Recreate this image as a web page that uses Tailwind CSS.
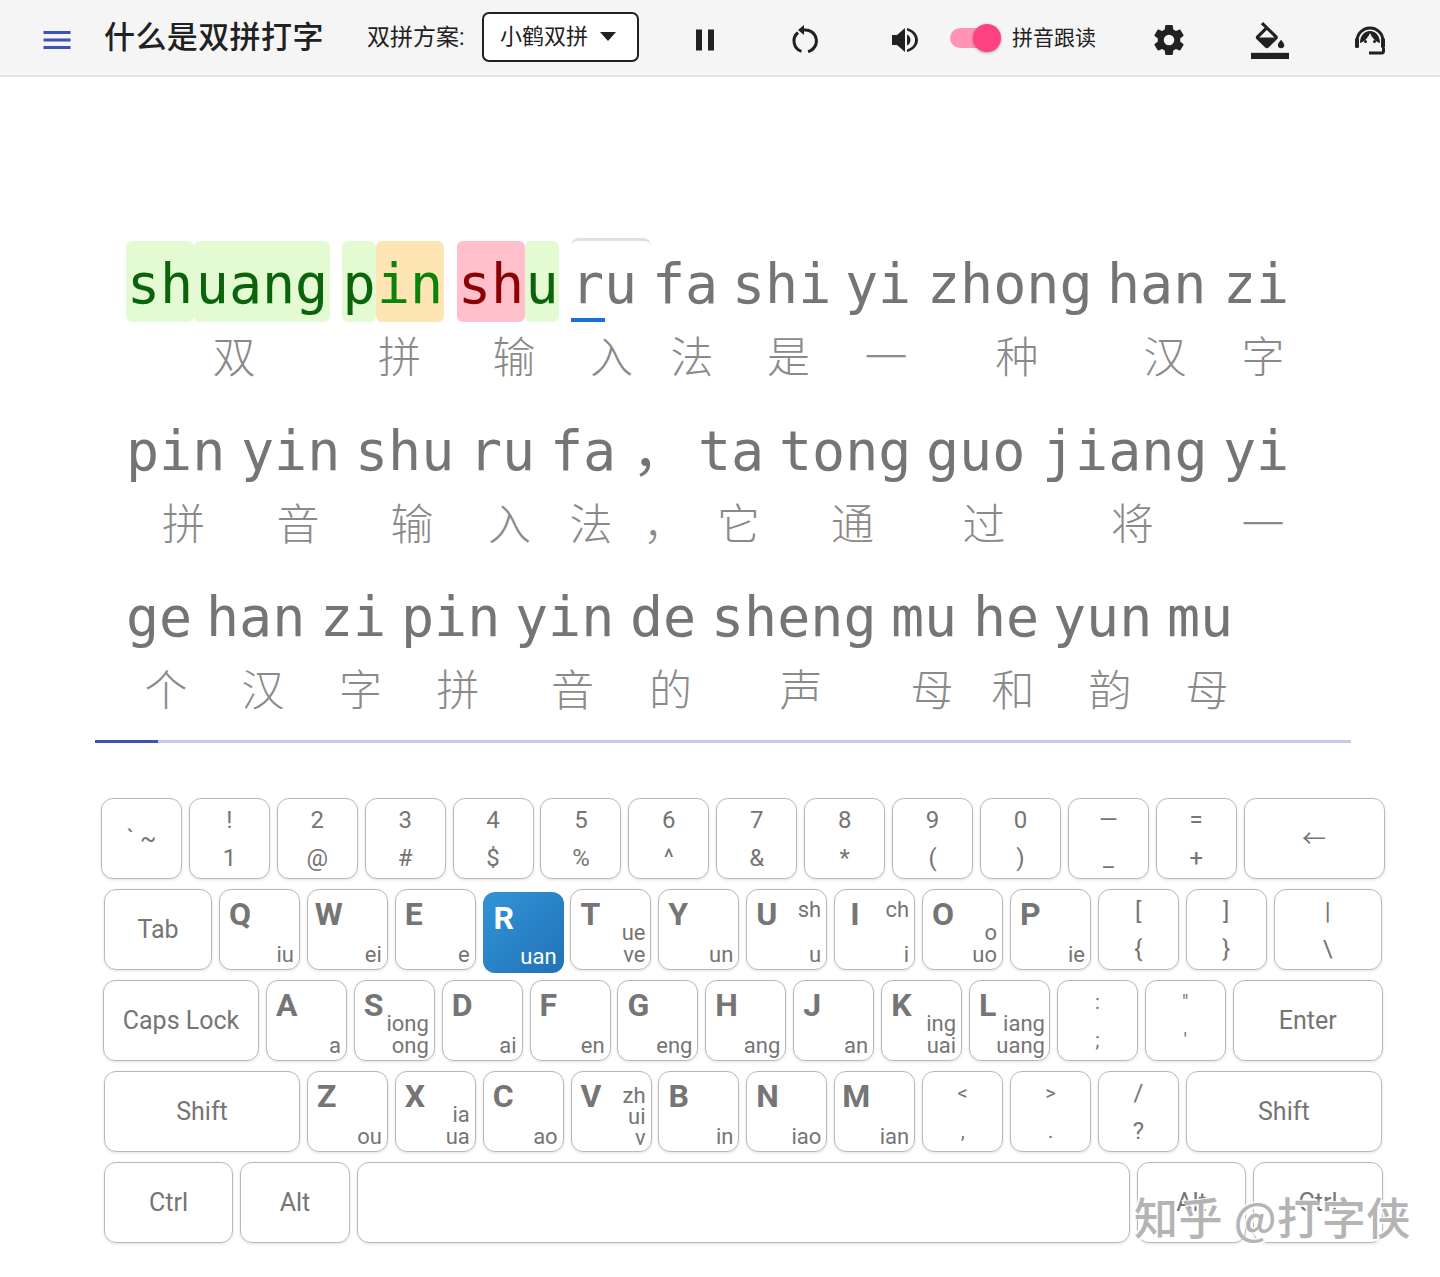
<!DOCTYPE html>
<html lang="zh"><head><meta charset="utf-8">
<script src="https://cdn.jsdelivr.net/npm/@tailwindcss/browser@4"></script>
</head>
<body class="bg-white font-['Roboto','Noto_Sans_CJK_SC',sans-serif] text-[#757575] w-[1440px] h-[1277px] overflow-hidden relative">
<header class="h-[77px] bg-[#f5f5f5] border-b-2 border-[#e4e4e4] flex items-center relative text-[#212121]">
  <svg class="absolute left-[39px] top-[22px] w-9 h-9" viewBox="0 0 24 24" fill="#3f51b5"><path d="M3,6H21V8H3V6M3,11H21V13H3V11M3,16H21V18H3V16Z"/></svg>
  <h1 class="ml-[104px] w-[263px] text-[31px] tracking-[0.4px] font-medium leading-none">什么是双拼打字</h1>
  <span class="text-[23px] w-[115px] leading-none">双拼方案:</span>
  <div class="w-[157px] h-[50px] mb-[2px] bg-white border-2 border-[#212121] rounded-[7px] flex items-center pl-[16px] text-[22px] gap-[12px]">小鹤双拼<svg class="w-[16px] h-[9px]" viewBox="0 0 16 9"><path d="M0,0H16L8,9Z" fill="#212121"/></svg></div>
  <svg class="absolute left-[687px] top-[22px] w-9 h-9" viewBox="0 0 24 24" fill="#212121"><path d="M14,19H18V5H14M6,19H10V5H6V19Z"/></svg>
  <svg class="absolute left-[787px] top-[22px] w-9 h-9" viewBox="0 0 36 36" fill="none" stroke="#212121" stroke-width="3"><path d="M17,8A11,11 0 0 1 21,29.600"/><path d="M14.500,29.400A11,11 0 0 1 11,10.500"/><path d="M17,3L11,8L17,13Z" fill="#212121" stroke="none"/></svg>
  <svg class="absolute left-[887px] top-[22px] w-9 h-9" viewBox="0 0 36 36" fill="#212121"><path d="M5,13V23H10L18,30V6L10,13Z"/><path d="M20,12.500C22.500,13.500 23.500,16 23.500,18C23.500,20 22.500,22.500 20,23.500Z"/><path d="M20,6V8.500C25,10 28,13.500 28,18C28,22.500 25,26 20,27.500V30C26.500,28.500 31,23.500 31,18C31,12.500 26.500,7.500 20,6Z"/></svg>
  <div class="absolute left-[950px] top-[28px] w-[44px] h-[20px] rounded-full bg-[#ff94b6]"></div>
  <div class="absolute left-[973px] top-[24px] w-[28px] h-[28px] rounded-full bg-[#ff4081] shadow-[0_1px_3px_rgba(0,0,0,0.35)]"></div>
  <span class="absolute left-[1012px] top-[26px] text-[21px] leading-[24px]">拼音跟读</span>
  <svg class="absolute left-[1151px] top-[22px] w-9 h-9" viewBox="0 0 24 24" fill="#212121"><path d="M12,15.5A3.5,3.5 0 0,1 8.5,12A3.5,3.5 0 0,1 12,8.5A3.5,3.5 0 0,1 15.5,12A3.5,3.5 0 0,1 12,15.5M19.43,12.97C19.47,12.65 19.5,12.33 19.5,12C19.5,11.67 19.47,11.34 19.43,11L21.54,9.37C21.73,9.22 21.78,8.95 21.66,8.73L19.66,5.27C19.54,5.05 19.27,4.96 19.05,5.05L16.56,6.05C16.04,5.66 15.5,5.32 14.87,5.07L14.5,2.42C14.46,2.18 14.25,2 14,2H10C9.75,2 9.54,2.18 9.5,2.42L9.13,5.07C8.5,5.32 7.96,5.66 7.44,6.05L4.95,5.05C4.73,4.96 4.46,5.05 4.34,5.27L2.34,8.73C2.21,8.95 2.27,9.22 2.46,9.37L4.57,11C4.53,11.34 4.5,11.67 4.5,12C4.5,12.33 4.53,12.65 4.57,12.97L2.46,14.63C2.27,14.78 2.21,15.05 2.34,15.27L4.34,18.73C4.46,18.95 4.73,19.03 4.95,18.95L7.44,17.94C7.96,18.34 8.5,18.68 9.13,18.93L9.5,21.58C9.54,21.82 9.75,22 10,22H14C14.25,22 14.46,21.82 14.5,21.58L14.87,18.93C15.5,18.67 16.04,18.34 16.56,17.94L19.05,18.95C19.27,19.03 19.54,18.95 19.66,18.73L21.66,15.27C21.78,15.05 21.73,14.78 21.54,14.63L19.43,12.97Z"/></svg>
  <svg class="absolute left-[1251px] top-[22px] w-[38px] h-[37px]" viewBox="0 0 24 24" fill="#212121" preserveAspectRatio="none"><path d="M16.56 8.94L7.62 0 6.21 1.41l2.38 2.38-5.15 5.15c-.59.59-.59 1.54 0 2.12l5.5 5.5c.29.29.68.44 1.06.44s.77-.15 1.06-.44l5.5-5.5c.59-.58.59-1.53 0-2.12zM5.21 10L10 5.21 14.79 10H5.21zM19 11.5s-2 2.17-2 3.5c0 1.1.9 2 2 2s2-.9 2-2c0-1.33-2-3.5-2-3.5z"/><rect x="0" y="20" width="24" height="4"/></svg>
  <svg class="absolute left-[1353px] top-[24px] w-[34px] h-[32px]" viewBox="0 0 34 32" fill="#212121"><path d="M4,22V17A13,13 0 0 1 30,17V22" fill="none" stroke="#212121" stroke-width="3"/><path d="M7,19C7,12 11,7 17,7C23,7 27,12 27,19C23,18 19,14 17,9C15,14 11,18 7,19Z"/><rect x="2" y="14" width="4" height="10" rx="1.500"/><rect x="28" y="14" width="4" height="10" rx="1.500"/><circle cx="12.500" cy="17.500" r="1.500"/><circle cx="21.500" cy="17.500" r="1.500"/><path d="M30.500,24V27Q30.500,29 28.500,29H16" fill="none" stroke="#212121" stroke-width="3"/></svg>
</header>

<main class="mt-[164px] ml-[126px] font-['DejaVu_Sans_Mono','Noto_Sans_CJK_SC',monospace]">
  <div class="flex h-[166.5px]">
    <div class="w-[216px]"><div class="flex h-[81px] items-center text-[55px] leading-none"><span class="w-[68px] h-[81px] pt-[6px] flex items-center justify-center rounded-[6px] bg-[#e3fad2] text-[#0b640b]">sh</span><span class="w-[136px] h-[81px] pt-[6px] flex items-center justify-center rounded-[6px] bg-[#e3fad2] text-[#0b640b]">uang</span></div><div class="h-[65px] flex items-center justify-center font-['Noto_Sans_CJK_SC'] font-light text-[43px] text-[#8a8a8a]">双</div></div>
    <div class="w-[115px]"><div class="flex h-[81px] items-center text-[55px] leading-none"><span class="w-[34px] h-[81px] pt-[6px] flex items-center justify-center rounded-[6px] bg-[#e3fad2] text-[#0b640b]">p</span><span class="w-[68px] h-[81px] pt-[6px] flex items-center justify-center rounded-[6px] bg-[#fde6b3] text-[#0b820b]">in</span></div><div class="h-[65px] flex items-center justify-center font-['Noto_Sans_CJK_SC'] font-light text-[43px] text-[#8a8a8a]">拼</div></div>
    <div class="w-[114px]"><div class="flex h-[81px] items-center text-[55px] leading-none"><span class="w-[68px] h-[81px] pt-[6px] flex items-center justify-center rounded-[6px] bg-[#ffc0cb] text-[#8b0000]">sh</span><span class="w-[34px] h-[81px] pt-[6px] flex items-center justify-center rounded-[6px] bg-[#e3fad2] text-[#0b640b]">u</span></div><div class="h-[65px] flex items-center justify-center font-['Noto_Sans_CJK_SC'] font-light text-[43px] text-[#8a8a8a]">输</div></div>
    <div class="w-[81px] relative"><div class="absolute left-0 top-[-3px] w-[80px] h-[10px] rounded-t-[8px] border-t-[3px] border-[#e0e0e0]"></div><div class="absolute left-0 top-[77px] w-[34px] h-[4px] bg-[#1a6ed8]"></div><div class="flex h-[81px] items-center text-[55px] leading-none pt-[6px]">ru</div><div class="h-[65px] flex items-center justify-center font-['Noto_Sans_CJK_SC'] font-light text-[43px] text-[#8a8a8a]">入</div></div>
    <div class="w-[80px]"><div class="flex h-[81px] items-center text-[55px] leading-none pt-[6px]">fa</div><div class="h-[65px] flex items-center justify-center font-['Noto_Sans_CJK_SC'] font-light text-[43px] text-[#8a8a8a]">法</div></div>
    <div class="w-[113px]"><div class="flex h-[81px] items-center text-[55px] leading-none pt-[6px]">shi</div><div class="h-[65px] flex items-center justify-center font-['Noto_Sans_CJK_SC'] font-light text-[43px] text-[#8a8a8a]">是</div></div>
    <div class="w-[82px]"><div class="flex h-[81px] items-center text-[55px] leading-none pt-[6px]">yi</div><div class="h-[65px] flex items-center justify-center font-['Noto_Sans_CJK_SC'] font-light text-[43px] text-[#8a8a8a]">一</div></div>
    <div class="w-[180px]"><div class="flex h-[81px] items-center text-[55px] leading-none pt-[6px]">zhong</div><div class="h-[65px] flex items-center justify-center font-['Noto_Sans_CJK_SC'] font-light text-[43px] text-[#8a8a8a]">种</div></div>
    <div class="w-[116px]"><div class="flex h-[81px] items-center text-[55px] leading-none pt-[6px]">han</div><div class="h-[65px] flex items-center justify-center font-['Noto_Sans_CJK_SC'] font-light text-[43px] text-[#8a8a8a]">汉</div></div>
    <div class="w-[80px]"><div class="flex h-[81px] items-center text-[55px] leading-none pt-[6px]">zi</div><div class="h-[65px] flex items-center justify-center font-['Noto_Sans_CJK_SC'] font-light text-[43px] text-[#8a8a8a]">字</div></div>
  </div>
  <div class="flex h-[166.5px]">
    <div class="w-[115px]"><div class="flex h-[81px] items-center text-[55px] leading-none pt-[6px]">pin</div><div class="h-[65px] flex items-center justify-center font-['Noto_Sans_CJK_SC'] font-light text-[43px] text-[#8a8a8a]">拼</div></div>
    <div class="w-[114px]"><div class="flex h-[81px] items-center text-[55px] leading-none pt-[6px]">yin</div><div class="h-[65px] flex items-center justify-center font-['Noto_Sans_CJK_SC'] font-light text-[43px] text-[#8a8a8a]">音</div></div>
    <div class="w-[114px]"><div class="flex h-[81px] items-center text-[55px] leading-none pt-[6px]">shu</div><div class="h-[65px] flex items-center justify-center font-['Noto_Sans_CJK_SC'] font-light text-[43px] text-[#8a8a8a]">输</div></div>
    <div class="w-[81px]"><div class="flex h-[81px] items-center text-[55px] leading-none pt-[6px]">ru</div><div class="h-[65px] flex items-center justify-center font-['Noto_Sans_CJK_SC'] font-light text-[43px] text-[#8a8a8a]">入</div></div>
    <div class="w-[82px]"><div class="flex h-[81px] items-center text-[55px] leading-none pt-[6px]">fa</div><div class="h-[65px] flex items-center justify-center font-['Noto_Sans_CJK_SC'] font-light text-[43px] text-[#8a8a8a]">法</div></div>
    <div class="w-[66px]"><div class="flex h-[81px] items-center text-[55px] leading-none pt-[6px]">，</div><div class="h-[65px] flex items-center justify-center font-['Noto_Sans_CJK_SC'] font-light text-[43px] text-[#8a8a8a]">，</div></div>
    <div class="w-[81px]"><div class="flex h-[81px] items-center text-[55px] leading-none pt-[6px]">ta</div><div class="h-[65px] flex items-center justify-center font-['Noto_Sans_CJK_SC'] font-light text-[43px] text-[#8a8a8a]">它</div></div>
    <div class="w-[147px]"><div class="flex h-[81px] items-center text-[55px] leading-none pt-[6px]">tong</div><div class="h-[65px] flex items-center justify-center font-['Noto_Sans_CJK_SC'] font-light text-[43px] text-[#8a8a8a]">通</div></div>
    <div class="w-[116px]"><div class="flex h-[81px] items-center text-[55px] leading-none pt-[6px]">guo</div><div class="h-[65px] flex items-center justify-center font-['Noto_Sans_CJK_SC'] font-light text-[43px] text-[#8a8a8a]">过</div></div>
    <div class="w-[181px]"><div class="flex h-[81px] items-center text-[55px] leading-none pt-[6px]">jiang</div><div class="h-[65px] flex items-center justify-center font-['Noto_Sans_CJK_SC'] font-light text-[43px] text-[#8a8a8a]">将</div></div>
    <div class="w-[80px]"><div class="flex h-[81px] items-center text-[55px] leading-none pt-[6px]">yi</div><div class="h-[65px] flex items-center justify-center font-['Noto_Sans_CJK_SC'] font-light text-[43px] text-[#8a8a8a]">一</div></div>
  </div>
  <div class="flex h-[166px]">
    <div class="w-[80px]"><div class="flex h-[81px] items-center text-[55px] leading-none pt-[6px]">ge</div><div class="h-[65px] flex items-center justify-center font-['Noto_Sans_CJK_SC'] font-light text-[43px] text-[#8a8a8a]">个</div></div>
    <div class="w-[114px]"><div class="flex h-[81px] items-center text-[55px] leading-none pt-[6px]">han</div><div class="h-[65px] flex items-center justify-center font-['Noto_Sans_CJK_SC'] font-light text-[43px] text-[#8a8a8a]">汉</div></div>
    <div class="w-[81px]"><div class="flex h-[81px] items-center text-[55px] leading-none pt-[6px]">zi</div><div class="h-[65px] flex items-center justify-center font-['Noto_Sans_CJK_SC'] font-light text-[43px] text-[#8a8a8a]">字</div></div>
    <div class="w-[114px]"><div class="flex h-[81px] items-center text-[55px] leading-none pt-[6px]">pin</div><div class="h-[65px] flex items-center justify-center font-['Noto_Sans_CJK_SC'] font-light text-[43px] text-[#8a8a8a]">拼</div></div>
    <div class="w-[115px]"><div class="flex h-[81px] items-center text-[55px] leading-none pt-[6px]">yin</div><div class="h-[65px] flex items-center justify-center font-['Noto_Sans_CJK_SC'] font-light text-[43px] text-[#8a8a8a]">音</div></div>
    <div class="w-[81px]"><div class="flex h-[81px] items-center text-[55px] leading-none pt-[6px]">de</div><div class="h-[65px] flex items-center justify-center font-['Noto_Sans_CJK_SC'] font-light text-[43px] text-[#8a8a8a]">的</div></div>
    <div class="w-[180px]"><div class="flex h-[81px] items-center text-[55px] leading-none pt-[6px]">sheng</div><div class="h-[65px] flex items-center justify-center font-['Noto_Sans_CJK_SC'] font-light text-[43px] text-[#8a8a8a]">声</div></div>
    <div class="w-[82px]"><div class="flex h-[81px] items-center text-[55px] leading-none pt-[6px]">mu</div><div class="h-[65px] flex items-center justify-center font-['Noto_Sans_CJK_SC'] font-light text-[43px] text-[#8a8a8a]">母</div></div>
    <div class="w-[80px]"><div class="flex h-[81px] items-center text-[55px] leading-none pt-[6px]">he</div><div class="h-[65px] flex items-center justify-center font-['Noto_Sans_CJK_SC'] font-light text-[43px] text-[#8a8a8a]">和</div></div>
    <div class="w-[114px]"><div class="flex h-[81px] items-center text-[55px] leading-none pt-[6px]">yun</div><div class="h-[65px] flex items-center justify-center font-['Noto_Sans_CJK_SC'] font-light text-[43px] text-[#8a8a8a]">韵</div></div>
    <div class="w-[80px]"><div class="flex h-[81px] items-center text-[55px] leading-none pt-[6px]">mu</div><div class="h-[65px] flex items-center justify-center font-['Noto_Sans_CJK_SC'] font-light text-[43px] text-[#8a8a8a]">母</div></div>
  </div>
</main>

<div class="ml-[95px] w-[1256px] h-[3px] bg-[#c5cae9]"><div class="w-[63px] h-[3px] bg-[#3f51b5]"></div></div>

<section class="mt-[55px] flex flex-col gap-[10px] text-[24px] leading-[26px]">
  <div class="flex gap-[6.9px] ml-[101px]">
    <div class="w-[81px] h-[81px] rounded-[12px] border-[1.5px] border-[#b8b8b8] shadow-[0_1px_3px_rgba(0,0,0,0.12)] flex items-center justify-center">` ~</div>
    <div class="w-[81px] h-[81px] rounded-[12px] border-[1.5px] border-[#b8b8b8] shadow-[0_1px_3px_rgba(0,0,0,0.12)] flex flex-col items-center justify-between pt-[8px] pb-[7px]"><span>!</span><span>1</span></div>
    <div class="w-[81px] h-[81px] rounded-[12px] border-[1.5px] border-[#b8b8b8] shadow-[0_1px_3px_rgba(0,0,0,0.12)] flex flex-col items-center justify-between pt-[8px] pb-[7px]"><span>2</span><span>@</span></div>
    <div class="w-[81px] h-[81px] rounded-[12px] border-[1.5px] border-[#b8b8b8] shadow-[0_1px_3px_rgba(0,0,0,0.12)] flex flex-col items-center justify-between pt-[8px] pb-[7px]"><span>3</span><span>#</span></div>
    <div class="w-[81px] h-[81px] rounded-[12px] border-[1.5px] border-[#b8b8b8] shadow-[0_1px_3px_rgba(0,0,0,0.12)] flex flex-col items-center justify-between pt-[8px] pb-[7px]"><span>4</span><span>$</span></div>
    <div class="w-[81px] h-[81px] rounded-[12px] border-[1.5px] border-[#b8b8b8] shadow-[0_1px_3px_rgba(0,0,0,0.12)] flex flex-col items-center justify-between pt-[8px] pb-[7px]"><span>5</span><span>%</span></div>
    <div class="w-[81px] h-[81px] rounded-[12px] border-[1.5px] border-[#b8b8b8] shadow-[0_1px_3px_rgba(0,0,0,0.12)] flex flex-col items-center justify-between pt-[8px] pb-[7px]"><span>6</span><span>^</span></div>
    <div class="w-[81px] h-[81px] rounded-[12px] border-[1.5px] border-[#b8b8b8] shadow-[0_1px_3px_rgba(0,0,0,0.12)] flex flex-col items-center justify-between pt-[8px] pb-[7px]"><span>7</span><span>&amp;</span></div>
    <div class="w-[81px] h-[81px] rounded-[12px] border-[1.5px] border-[#b8b8b8] shadow-[0_1px_3px_rgba(0,0,0,0.12)] flex flex-col items-center justify-between pt-[8px] pb-[7px]"><span>8</span><span>*</span></div>
    <div class="w-[81px] h-[81px] rounded-[12px] border-[1.5px] border-[#b8b8b8] shadow-[0_1px_3px_rgba(0,0,0,0.12)] flex flex-col items-center justify-between pt-[8px] pb-[7px]"><span>9</span><span>(</span></div>
    <div class="w-[81px] h-[81px] rounded-[12px] border-[1.5px] border-[#b8b8b8] shadow-[0_1px_3px_rgba(0,0,0,0.12)] flex flex-col items-center justify-between pt-[8px] pb-[7px]"><span>0</span><span>)</span></div>
    <div class="w-[81px] h-[81px] rounded-[12px] border-[1.5px] border-[#b8b8b8] shadow-[0_1px_3px_rgba(0,0,0,0.12)] flex flex-col items-center justify-between pt-[8px] pb-[7px]"><span>—</span><span>_</span></div>
    <div class="w-[81px] h-[81px] rounded-[12px] border-[1.5px] border-[#b8b8b8] shadow-[0_1px_3px_rgba(0,0,0,0.12)] flex flex-col items-center justify-between pt-[8px] pb-[7px]"><span>=</span><span>+</span></div>
    <div class="w-[141px] h-[81px] rounded-[12px] border-[1.5px] border-[#b8b8b8] shadow-[0_1px_3px_rgba(0,0,0,0.12)] flex items-center justify-center">←</div>
  </div>
  <div class="flex gap-[6.9px] ml-[104px]">
    <div class="w-[108px] h-[81px] rounded-[12px] border-[1.5px] border-[#b8b8b8] shadow-[0_1px_3px_rgba(0,0,0,0.12)] flex items-center justify-center text-[25px]">Tab</div>
    <div class="w-[81px] h-[81px] rounded-[12px] border-[1.5px] border-[#b8b8b8] shadow-[0_1px_3px_rgba(0,0,0,0.12)] flex justify-between pl-[9px] pr-[5px] pt-[5px] pb-[3px]"><span class="text-[32px] leading-[38px] font-bold">Q</span><span class="flex flex-col items-end justify-end text-[22px] leading-[22px]"><span>iu</span></span></div>
    <div class="w-[81px] h-[81px] rounded-[12px] border-[1.5px] border-[#b8b8b8] shadow-[0_1px_3px_rgba(0,0,0,0.12)] flex justify-between pl-[7px] pr-[5px] pt-[5px] pb-[3px]"><span class="text-[32px] leading-[38px] font-bold">W</span><span class="flex flex-col items-end justify-end text-[22px] leading-[22px]"><span>ei</span></span></div>
    <div class="w-[81px] h-[81px] rounded-[12px] border-[1.5px] border-[#b8b8b8] shadow-[0_1px_3px_rgba(0,0,0,0.12)] flex justify-between pl-[9px] pr-[5px] pt-[5px] pb-[3px]"><span class="text-[32px] leading-[38px] font-bold">E</span><span class="flex flex-col items-end justify-end text-[22px] leading-[22px]"><span>e</span></span></div>
    <div class="w-[81px] h-[81px] translate-y-[3px] rounded-[12px] bg-gradient-to-br from-[#3394d6] to-[#2172b8] text-white flex justify-between pl-[11px] pr-[7px] pt-[7px] pb-[5px]"><span class="text-[32px] leading-[38px] font-bold">R</span><span class="flex flex-col items-end justify-end text-[22px] leading-[22px]"><span>uan</span></span></div>
    <div class="w-[81px] h-[81px] rounded-[12px] border-[1.5px] border-[#b8b8b8] shadow-[0_1px_3px_rgba(0,0,0,0.12)] flex justify-between pl-[9px] pr-[5px] pt-[5px] pb-[3px]"><span class="text-[32px] leading-[38px] font-bold">T</span><span class="flex flex-col items-end justify-end text-[22px] leading-[22px]"><span>ue</span><span>ve</span></span></div>
    <div class="w-[81px] h-[81px] rounded-[12px] border-[1.5px] border-[#b8b8b8] shadow-[0_1px_3px_rgba(0,0,0,0.12)] flex justify-between pl-[9px] pr-[5px] pt-[5px] pb-[3px]"><span class="text-[32px] leading-[38px] font-bold">Y</span><span class="flex flex-col items-end justify-end text-[22px] leading-[22px]"><span>un</span></span></div>
    <div class="w-[81px] h-[81px] rounded-[12px] border-[1.5px] border-[#b8b8b8] shadow-[0_1px_3px_rgba(0,0,0,0.12)] flex justify-between pl-[9px] pr-[5px] pt-[5px] pb-[3px]"><span class="text-[32px] leading-[38px] font-bold">U</span><span class="flex flex-col items-end justify-between text-[22px] leading-[22px] pt-[4px]"><span>sh</span><span>u</span></span></div>
    <div class="w-[81px] h-[81px] rounded-[12px] border-[1.5px] border-[#b8b8b8] shadow-[0_1px_3px_rgba(0,0,0,0.12)] flex justify-between pl-[15px] pr-[5px] pt-[5px] pb-[3px]"><span class="text-[32px] leading-[38px] font-bold">I</span><span class="flex flex-col items-end justify-between text-[22px] leading-[22px] pt-[4px]"><span>ch</span><span>i</span></span></div>
    <div class="w-[81px] h-[81px] rounded-[12px] border-[1.5px] border-[#b8b8b8] shadow-[0_1px_3px_rgba(0,0,0,0.12)] flex justify-between pl-[9px] pr-[5px] pt-[5px] pb-[3px]"><span class="text-[32px] leading-[38px] font-bold">O</span><span class="flex flex-col items-end justify-end text-[22px] leading-[22px]"><span>o</span><span>uo</span></span></div>
    <div class="w-[81px] h-[81px] rounded-[12px] border-[1.5px] border-[#b8b8b8] shadow-[0_1px_3px_rgba(0,0,0,0.12)] flex justify-between pl-[9px] pr-[5px] pt-[5px] pb-[3px]"><span class="text-[32px] leading-[38px] font-bold">P</span><span class="flex flex-col items-end justify-end text-[22px] leading-[22px]"><span>ie</span></span></div>
    <div class="w-[81px] h-[81px] rounded-[12px] border-[1.5px] border-[#b8b8b8] shadow-[0_1px_3px_rgba(0,0,0,0.12)] flex flex-col items-center justify-between pt-[8px] pb-[7px]"><span>[</span><span>{</span></div>
    <div class="w-[81px] h-[81px] rounded-[12px] border-[1.5px] border-[#b8b8b8] shadow-[0_1px_3px_rgba(0,0,0,0.12)] flex flex-col items-center justify-between pt-[8px] pb-[7px]"><span>]</span><span>}</span></div>
    <div class="w-[108px] h-[81px] rounded-[12px] border-[1.5px] border-[#b8b8b8] shadow-[0_1px_3px_rgba(0,0,0,0.12)] flex flex-col items-center justify-between pt-[8px] pb-[7px]"><span>|</span><span>\</span></div>
  </div>
  <div class="flex gap-[6.9px] ml-[103px]">
    <div class="w-[156px] h-[81px] rounded-[12px] border-[1.5px] border-[#b8b8b8] shadow-[0_1px_3px_rgba(0,0,0,0.12)] flex items-center justify-center text-[25px]">Caps Lock</div>
    <div class="w-[81px] h-[81px] rounded-[12px] border-[1.5px] border-[#b8b8b8] shadow-[0_1px_3px_rgba(0,0,0,0.12)] flex justify-between pl-[9px] pr-[5px] pt-[5px] pb-[3px]"><span class="text-[32px] leading-[38px] font-bold">A</span><span class="flex flex-col items-end justify-end text-[22px] leading-[22px]"><span>a</span></span></div>
    <div class="w-[81px] h-[81px] rounded-[12px] border-[1.5px] border-[#b8b8b8] shadow-[0_1px_3px_rgba(0,0,0,0.12)] flex justify-between pl-[9px] pr-[5px] pt-[5px] pb-[3px]"><span class="text-[32px] leading-[38px] font-bold">S</span><span class="flex flex-col items-end justify-end text-[22px] leading-[22px]"><span>iong</span><span>ong</span></span></div>
    <div class="w-[81px] h-[81px] rounded-[12px] border-[1.5px] border-[#b8b8b8] shadow-[0_1px_3px_rgba(0,0,0,0.12)] flex justify-between pl-[9px] pr-[5px] pt-[5px] pb-[3px]"><span class="text-[32px] leading-[38px] font-bold">D</span><span class="flex flex-col items-end justify-end text-[22px] leading-[22px]"><span>ai</span></span></div>
    <div class="w-[81px] h-[81px] rounded-[12px] border-[1.5px] border-[#b8b8b8] shadow-[0_1px_3px_rgba(0,0,0,0.12)] flex justify-between pl-[9px] pr-[5px] pt-[5px] pb-[3px]"><span class="text-[32px] leading-[38px] font-bold">F</span><span class="flex flex-col items-end justify-end text-[22px] leading-[22px]"><span>en</span></span></div>
    <div class="w-[81px] h-[81px] rounded-[12px] border-[1.5px] border-[#b8b8b8] shadow-[0_1px_3px_rgba(0,0,0,0.12)] flex justify-between pl-[9px] pr-[5px] pt-[5px] pb-[3px]"><span class="text-[32px] leading-[38px] font-bold">G</span><span class="flex flex-col items-end justify-end text-[22px] leading-[22px]"><span>eng</span></span></div>
    <div class="w-[81px] h-[81px] rounded-[12px] border-[1.5px] border-[#b8b8b8] shadow-[0_1px_3px_rgba(0,0,0,0.12)] flex justify-between pl-[9px] pr-[5px] pt-[5px] pb-[3px]"><span class="text-[32px] leading-[38px] font-bold">H</span><span class="flex flex-col items-end justify-end text-[22px] leading-[22px]"><span>ang</span></span></div>
    <div class="w-[81px] h-[81px] rounded-[12px] border-[1.5px] border-[#b8b8b8] shadow-[0_1px_3px_rgba(0,0,0,0.12)] flex justify-between pl-[9px] pr-[5px] pt-[5px] pb-[3px]"><span class="text-[32px] leading-[38px] font-bold">J</span><span class="flex flex-col items-end justify-end text-[22px] leading-[22px]"><span>an</span></span></div>
    <div class="w-[81px] h-[81px] rounded-[12px] border-[1.5px] border-[#b8b8b8] shadow-[0_1px_3px_rgba(0,0,0,0.12)] flex justify-between pl-[9px] pr-[5px] pt-[5px] pb-[3px]"><span class="text-[32px] leading-[38px] font-bold">K</span><span class="flex flex-col items-end justify-end text-[22px] leading-[22px]"><span>ing</span><span>uai</span></span></div>
    <div class="w-[81px] h-[81px] rounded-[12px] border-[1.5px] border-[#b8b8b8] shadow-[0_1px_3px_rgba(0,0,0,0.12)] flex justify-between pl-[9px] pr-[5px] pt-[5px] pb-[3px]"><span class="text-[32px] leading-[38px] font-bold">L</span><span class="flex flex-col items-end justify-end text-[22px] leading-[22px]"><span>iang</span><span>uang</span></span></div>
    <div class="w-[81px] h-[81px] rounded-[12px] border-[1.5px] border-[#b8b8b8] shadow-[0_1px_3px_rgba(0,0,0,0.12)] flex flex-col items-center justify-between pt-[8px] pb-[7px] text-[20px]"><span>:</span><span>;</span></div>
    <div class="w-[81px] h-[81px] rounded-[12px] border-[1.5px] border-[#b8b8b8] shadow-[0_1px_3px_rgba(0,0,0,0.12)] flex flex-col items-center justify-between pt-[8px] pb-[7px] text-[20px]"><span>"</span><span>'</span></div>
    <div class="w-[150px] h-[81px] rounded-[12px] border-[1.5px] border-[#b8b8b8] shadow-[0_1px_3px_rgba(0,0,0,0.12)] flex items-center justify-center text-[25px]">Enter</div>
  </div>
  <div class="flex gap-[6.9px] ml-[104px]">
    <div class="w-[196px] h-[81px] rounded-[12px] border-[1.5px] border-[#b8b8b8] shadow-[0_1px_3px_rgba(0,0,0,0.12)] flex items-center justify-center text-[25px]">Shift</div>
    <div class="w-[81px] h-[81px] rounded-[12px] border-[1.5px] border-[#b8b8b8] shadow-[0_1px_3px_rgba(0,0,0,0.12)] flex justify-between pl-[9px] pr-[5px] pt-[5px] pb-[3px]"><span class="text-[32px] leading-[38px] font-bold">Z</span><span class="flex flex-col items-end justify-end text-[22px] leading-[22px]"><span>ou</span></span></div>
    <div class="w-[81px] h-[81px] rounded-[12px] border-[1.5px] border-[#b8b8b8] shadow-[0_1px_3px_rgba(0,0,0,0.12)] flex justify-between pl-[9px] pr-[5px] pt-[5px] pb-[3px]"><span class="text-[32px] leading-[38px] font-bold">X</span><span class="flex flex-col items-end justify-end text-[22px] leading-[22px]"><span>ia</span><span>ua</span></span></div>
    <div class="w-[81px] h-[81px] rounded-[12px] border-[1.5px] border-[#b8b8b8] shadow-[0_1px_3px_rgba(0,0,0,0.12)] flex justify-between pl-[9px] pr-[5px] pt-[5px] pb-[3px]"><span class="text-[32px] leading-[38px] font-bold">C</span><span class="flex flex-col items-end justify-end text-[22px] leading-[22px]"><span>ao</span></span></div>
    <div class="w-[81px] h-[81px] rounded-[12px] border-[1.5px] border-[#b8b8b8] shadow-[0_1px_3px_rgba(0,0,0,0.12)] flex justify-between pl-[9px] pr-[5px] pt-[5px] pb-[3px]"><span class="text-[32px] leading-[38px] font-bold">V</span><span class="flex flex-col items-end justify-end text-[22px] leading-[21px]"><span>zh</span><span>ui</span><span>v</span></span></div>
    <div class="w-[81px] h-[81px] rounded-[12px] border-[1.5px] border-[#b8b8b8] shadow-[0_1px_3px_rgba(0,0,0,0.12)] flex justify-between pl-[9px] pr-[5px] pt-[5px] pb-[3px]"><span class="text-[32px] leading-[38px] font-bold">B</span><span class="flex flex-col items-end justify-end text-[22px] leading-[22px]"><span>in</span></span></div>
    <div class="w-[81px] h-[81px] rounded-[12px] border-[1.5px] border-[#b8b8b8] shadow-[0_1px_3px_rgba(0,0,0,0.12)] flex justify-between pl-[9px] pr-[5px] pt-[5px] pb-[3px]"><span class="text-[32px] leading-[38px] font-bold">N</span><span class="flex flex-col items-end justify-end text-[22px] leading-[22px]"><span>iao</span></span></div>
    <div class="w-[81px] h-[81px] rounded-[12px] border-[1.5px] border-[#b8b8b8] shadow-[0_1px_3px_rgba(0,0,0,0.12)] flex justify-between pl-[7px] pr-[5px] pt-[5px] pb-[3px]"><span class="text-[32px] leading-[38px] font-bold">M</span><span class="flex flex-col items-end justify-end text-[22px] leading-[22px]"><span>ian</span></span></div>
    <div class="w-[81px] h-[81px] rounded-[12px] border-[1.5px] border-[#b8b8b8] shadow-[0_1px_3px_rgba(0,0,0,0.12)] flex flex-col items-center justify-between pt-[8px] pb-[7px] text-[20px]"><span>&lt;</span><span>,</span></div>
    <div class="w-[81px] h-[81px] rounded-[12px] border-[1.5px] border-[#b8b8b8] shadow-[0_1px_3px_rgba(0,0,0,0.12)] flex flex-col items-center justify-between pt-[8px] pb-[7px] text-[20px]"><span>&gt;</span><span>.</span></div>
    <div class="w-[81px] h-[81px] rounded-[12px] border-[1.5px] border-[#b8b8b8] shadow-[0_1px_3px_rgba(0,0,0,0.12)] flex flex-col items-center justify-between pt-[8px] pb-[7px]"><span>/</span><span>?</span></div>
    <div class="w-[196px] h-[81px] rounded-[12px] border-[1.5px] border-[#b8b8b8] shadow-[0_1px_3px_rgba(0,0,0,0.12)] flex items-center justify-center text-[25px]">Shift</div>
  </div>
  <div class="flex gap-[7px] ml-[104px]">
    <div class="w-[129px] h-[81px] rounded-[12px] border-[1.5px] border-[#b8b8b8] shadow-[0_1px_3px_rgba(0,0,0,0.12)] flex items-center justify-center text-[25px]">Ctrl</div>
    <div class="w-[110px] h-[81px] rounded-[12px] border-[1.5px] border-[#b8b8b8] shadow-[0_1px_3px_rgba(0,0,0,0.12)] flex items-center justify-center text-[25px]">Alt</div>
    <div class="w-[773px] h-[81px] rounded-[12px] border-[1.5px] border-[#b8b8b8] shadow-[0_1px_3px_rgba(0,0,0,0.12)]"></div>
    <div class="w-[109px] h-[81px] rounded-[12px] border-[1.5px] border-[#b8b8b8] shadow-[0_1px_3px_rgba(0,0,0,0.12)] flex items-center justify-center text-[25px]">Alt</div>
    <div class="w-[130px] h-[81px] rounded-[12px] border-[1.5px] border-[#b8b8b8] shadow-[0_1px_3px_rgba(0,0,0,0.12)] flex items-center justify-center text-[25px]">Ctrl</div>
  </div>
</section>

<div class="absolute left-[1134px] top-[1190px] text-[44px] tracking-[0.6px] leading-[52px] whitespace-nowrap font-['Noto_Sans_CJK_SC'] font-medium text-[#b4b4b4] [text-shadow:2px_2px_0_rgba(255,255,255,0.85),-2px_-1px_0_rgba(255,255,255,0.85)]">知乎 @打字侠</div>
</body></html>
